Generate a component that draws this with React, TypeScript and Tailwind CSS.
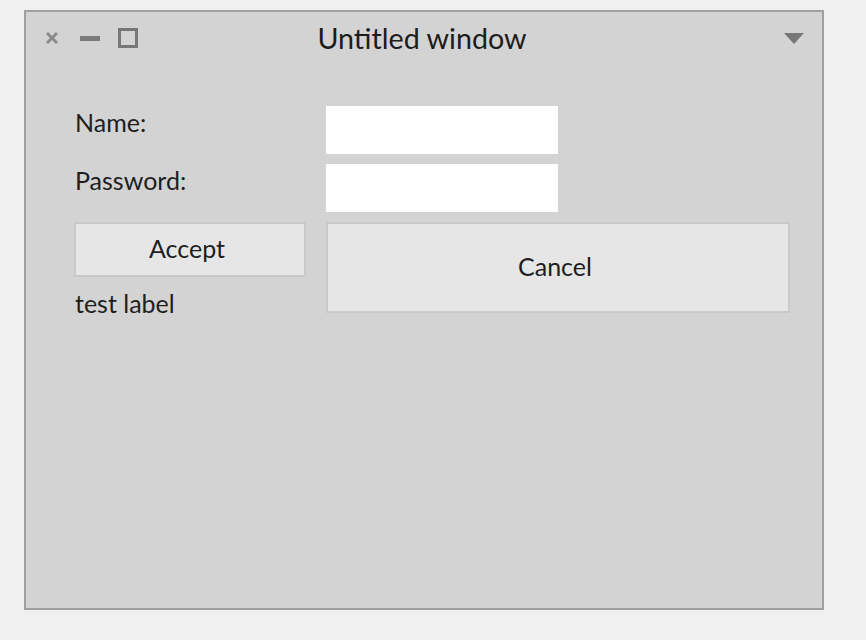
import React from 'react';

const font = { fontFamily: 'Lato, "Noto Sans", sans-serif' };

const App: React.FC = () => {
  return (
    <div className="w-[866px] h-[640px] bg-[#f0f0f0] pt-[10px] pl-[24px]" style={font}>
      <div className="w-[800px] h-[600px] border-2 border-[#a0a0a0] bg-[#d3d3d3] flex flex-col">
        {/* Title bar */}
        <div className="relative h-[52px] flex items-center shrink-0">
          <div className="flex items-center pl-[19px]">
            <svg width="14" height="14" viewBox="0 0 14 14" className="text-[#8a8a8a]">
              <path d="M2 2 L12 12 M12 2 L2 12" stroke="currentColor" strokeWidth="3" />
            </svg>
            <div className="w-[20px] h-[5px] bg-[#7a7a7a] ml-[21px]" />
            <div className="w-[20px] h-[20px] border-[3px] border-[#777777] ml-[18px]" />
          </div>
          <div className="absolute inset-0 flex items-center justify-center pr-[4px]">
            <span className="text-[28.7px] text-[#1c1c1c] leading-none">Untitled window</span>
          </div>
          <div className="ml-auto mr-[18px]">
            <svg width="20" height="11" viewBox="0 0 20 11">
              <path d="M0 0 L20 0 L10 11 Z" fill="#777777" />
            </svg>
          </div>
        </div>

        {/* Form */}
        <div className="pl-[48px] pt-[42px] flex flex-col text-[25px] text-[#1e1e1e]">
          <div className="flex h-[48px]">
            <div className="w-[252px] pl-[1px] pt-[1px] leading-[30px]">Name:</div>
            <div className="w-[232px] h-[48px] bg-white" />
          </div>
          <div className="flex h-[48px] mt-[10px]">
            <div className="w-[252px] pl-[1px] pt-[1px] leading-[30px]">Password:</div>
            <div className="w-[232px] h-[48px] bg-white" />
          </div>
          <div className="flex mt-[10px]">
            <div className="w-[252px] flex flex-col">
              <div className="w-[232px] h-[55px] border-2 border-[#c9c9c9] bg-[#e6e6e6] flex items-center justify-center pb-[2px] pr-[6px]">
                Accept
              </div>
              <div className="mt-[10px] pl-[1px] leading-[32px]">test label</div>
            </div>
            <div className="w-[464px] h-[91px] border-2 border-[#c9c9c9] bg-[#e6e6e6] flex items-center justify-center pb-[2px] pr-[6px]">
              Cancel
            </div>
          </div>
        </div>
      </div>
    </div>
  );
};

export default App;
